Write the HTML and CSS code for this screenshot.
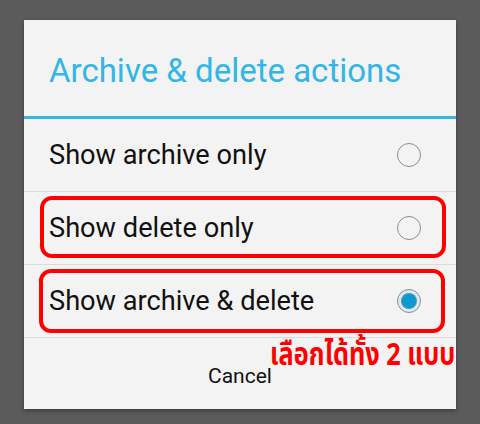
FILE: index.html
```html
<!DOCTYPE html>
<html>
<head>
<meta charset="utf-8">
<link rel="stylesheet" href="styles.css">
</head>
<body>
<div class="dialog">
  <div class="title">Archive &amp; delete actions</div>
  <div class="divider"></div>
  <div class="row"><span class="label">Show archive only</span><span class="radio"></span></div>
  <div class="row"><span class="label">Show delete only</span><span class="radio"></span></div>
  <div class="row"><span class="label">Show archive &amp; delete</span><span class="radio checked"><span class="dot"></span></span></div>
  <div class="buttons"><span class="cancel">Cancel</span></div>
  <div class="mark mark2"></div>
  <div class="mark mark3"></div>
  <div class="note">เลือกได้ทั้ง 2 แบบ</div>
</div>
</body>
</html>
```
FILE: styles.css
```css
html, body { margin: 0; padding: 0; }
body {
  background: #5b5b5b;
  width: 480px;
  height: 424px;
  overflow: hidden;
  padding: 20px 0 0 24px;
  box-sizing: border-box;
  font-family: Roboto, "Noto Sans", sans-serif;
}
.dialog {
  position: relative;
  width: 432px;
  height: 389px;
  background: #f3f3f3;
  box-shadow: 0 2px 4px rgba(0,0,0,0.35);
  display: flex;
  flex-direction: column;
}
.title {
  height: 96px;
  box-sizing: border-box;
  padding-left: 25px;
  display: flex;
  align-items: center;
  color: #33b5e5;
  font-size: 33px;
  padding-top: 4px;
}
.divider { height: 3px; background: #33b5e5; }
.row {
  height: 72px;
  border-bottom: 1px solid #dadada;
  display: flex;
  align-items: center;
  justify-content: space-between;
  padding: 0 35px 0 25px;
  color: #111;
  font-size: 27.2px;
}
.radio {
  width: 22px;
  height: 22px;
  border: 1.5px solid #8c8c8c;
  border-radius: 50%;
  display: flex;
  align-items: center;
  justify-content: center;
}
.radio.checked {
  background: #d5edf7;
  border-color: #8c8c8c;
}
.dot {
  width: 14px;
  height: 14px;
  border-radius: 50%;
  background: #0c9ad3;
  box-shadow: 0 0 0 1px #5a8fa8;
}
.buttons {
  flex: 1;
  display: flex;
  align-items: center;
  justify-content: center;
  padding-bottom: 4px;
}
.cancel { font-size: 21px; color: #111; padding-top: 8px; }
.mark {
  position: absolute;
  border: 4px solid #ff0000;
  border-radius: 12px;
  box-sizing: border-box;
}
.mark2 { left: 16px; top: 176px; width: 406px; height: 62px; }
.mark3 { left: 15px; top: 249px; width: 406px; height: 64px; }
.note {
  position: absolute;
  left: 246px;
  top: 317px;
  color: #ff0000;
  font-weight: bold;
  font-size: 31px;
  font-family: "Noto Sans Thai", "Noto Sans", sans-serif;
  line-height: 1.2;
  white-space: nowrap;
  transform: scaleX(0.815);
  transform-origin: left top;
}
```
